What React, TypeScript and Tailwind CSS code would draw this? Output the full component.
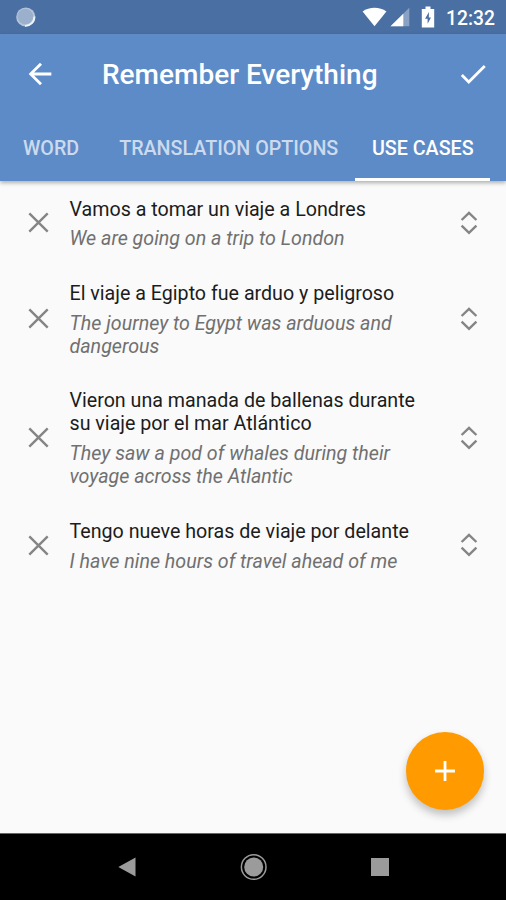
import { useState } from "react";
import { clsx } from "clsx";

interface UseCase {
  id: number;
  text: string;
  translation: string;
}

const TABS = [
  { label: "WORD", className: "pl-[23px] pr-5" },
  { label: "TRANSLATION OPTIONS", className: "pl-5 pr-[17px]" },
  { label: "USE CASES", className: "w-[135px] shrink-0" },
];

const USE_CASES: UseCase[] = [
  { id: 1, text: "Vamos a tomar un viaje a Londres", translation: "We are going on a trip to London" },
  { id: 2, text: "El viaje a Egipto fue arduo y peligroso", translation: "The journey to Egypt was arduous and dangerous" },
  { id: 3, text: "Vieron una manada de ballenas durante su viaje por el mar Atlántico", translation: "They saw a pod of whales during their voyage across the Atlantic" },
  { id: 4, text: "Tengo nueve horas de viaje por delante", translation: "I have nine hours of travel ahead of me" },
];

function StatusBar() {
  return (
    <div className="flex h-[34px] shrink-0 items-center bg-[#4a6fa2] pl-4 pr-[11px] text-white">
      <svg width="20" height="20" viewBox="0 0 20 20">
        <circle cx="9.8" cy="10" r="9.6" fill="#b4c4d9" />
        <path d="M18.4 9.5A9 9 0 0 1 9 18.8" fill="none" stroke="#eef4fb" strokeWidth="1.8" />
        <circle cx="9.3" cy="9.5" r="7.8" fill="#9bb0cc" />
      </svg>
      <svg className="ml-auto" width="25" height="20" viewBox="0 0 26 20" fill="currentColor">
        <path d="M0.6 4.2C7.6 -1 18.4 -1 25.4 4.2L13 19.6Z" />
      </svg>
      <svg className="ml-[3px]" width="20" height="20" viewBox="0 0 20 20" fill="currentColor">
        <path d="M0.5 19.3L19.3 0.8V19.3Z" opacity="0.35" />
        <path d="M0.5 19.3L13.3 6.7V19.3Z" />
      </svg>
      <svg className="ml-[11px]" width="14" height="22" viewBox="0 0 14 22">
        <path d="M4.5 0.5H9.5V3H13.2V21.5H0.8V3H4.5Z" fill="currentColor" />
        <path d="M8 6L4 12.8H6.6V17.8L10 11.4H7.8Z" fill="#4a6fa2" />
      </svg>
      <span className="ml-[11px] mt-[3px] text-[19.3px] font-medium leading-none">12:32</span>
    </div>
  );
}

export default function App() {
  const [activeTab, setActiveTab] = useState("USE CASES");
  const [useCases, setUseCases] = useState(USE_CASES);

  const removeUseCase = (id: number) => {
    setUseCases(useCases.filter((item) => item.id !== id));
  };

  return (
    <div className="relative flex h-[900px] w-[506px] flex-col overflow-hidden bg-[#fafafa] font-['Roboto',sans-serif]">
      <StatusBar />

      {/* App bar */}
      <header className="relative z-10 h-[147px] shrink-0 bg-[#5c8bc8] text-white shadow-[0_2px_4px_rgba(0,0,0,0.3)]">
        <div className="flex h-[80px] items-center pl-[23px] pr-4">
          <button type="button" aria-label="Back">
            <svg width="34" height="34" viewBox="0 0 24 24" fill="currentColor">
              <path d="M20 11H7.83l5.59-5.59L12 4l-8 8 8 8 1.41-1.41L7.83 13H20v-2z" />
            </svg>
          </button>
          <h1 className="ml-[45px] mt-[2px] whitespace-nowrap text-[28px] font-medium leading-none">Remember Everything</h1>
          <button type="button" aria-label="Save" className="ml-auto">
            <svg width="34" height="34" viewBox="0 0 24 24" fill="currentColor">
              <path d="M9 16.17L4.83 12l-1.42 1.41L9 19 21 7l-1.41-1.41z" />
            </svg>
          </button>
        </div>
        <nav className="flex h-[67px]">
          {TABS.map((tab) => (
            <button
              key={tab.label}
              type="button"
              onClick={() => setActiveTab(tab.label)}
              className={clsx(
                "whitespace-nowrap border-b-[3px] pt-[5px] text-[19.7px] font-medium leading-none",
                tab.className,
                activeTab === tab.label ? "border-white text-white" : "border-transparent text-white/70"
              )}
            >
              {tab.label}
            </button>
          ))}
        </nav>
      </header>

      {/* Use cases */}
      <ul className="flex grow flex-col gap-[31.6px] pt-[16.5px]">
        {useCases.map((item) => (
          <li key={item.id} className="flex items-center pl-7 pr-[28px]">
            <button type="button" aria-label="Delete" onClick={() => removeUseCase(item.id)} className="mb-[2px] text-[#858585]">
              <svg width="21" height="21" viewBox="0 0 21 21" fill="none" stroke="currentColor" strokeWidth="2.4">
                <path d="M1.3 1.3L19.7 19.7M19.7 1.3L1.3 19.7" />
              </svg>
            </button>
            <div className="ml-[20.5px] w-[360px] text-[19.65px] leading-[23px]">
              <p className="text-[#1c1c1c]">{item.text}</p>
              <p className="mt-[6.9px] italic text-[#707070]">{item.translation}</p>
            </div>
            <svg className="mb-[2px] ml-auto text-[#858585]" width="18" height="24" viewBox="0 0 18 24" fill="none" stroke="currentColor" strokeWidth="2.4">
              <path d="M1.6 9L9 1.8L16.4 9M1.6 14.6L9 21.8L16.4 14.6" />
            </svg>
          </li>
        ))}
      </ul>

      <button
        type="button"
        aria-label="Add"
        className="absolute left-[406px] top-[732px] flex size-[78px] items-center justify-center rounded-full bg-[#ff9a00] text-white shadow-[0_5px_9px_rgba(0,0,0,0.24)]"
      >
        <svg width="34" height="34" viewBox="0 0 24 24" fill="currentColor">
          <path d="M19 13h-6v6h-2v-6H5v-2h6V5h2v6h6v2z" />
        </svg>
      </button>

      {/* Navigation bar */}
      <div className="flex h-[67px] shrink-0 items-center justify-between border-t border-[#666] bg-black pl-[118px] pr-[117px] text-[#9b9b9b]">
        <svg width="18" height="20" viewBox="0 0 18 20" fill="currentColor">
          <path d="M0.3 10L17.5 0.4V19.6Z" />
        </svg>
        <svg width="28" height="28" viewBox="0 0 28 28" fill="currentColor">
          <circle cx="13.7" cy="14" r="12.3" fill="none" stroke="currentColor" strokeWidth="1.5" />
          <circle cx="13.7" cy="14" r="9.5" />
        </svg>
        <svg width="18" height="18" viewBox="0 0 18 18" fill="currentColor">
          <rect width="18" height="18" />
        </svg>
      </div>
    </div>
  );
}
